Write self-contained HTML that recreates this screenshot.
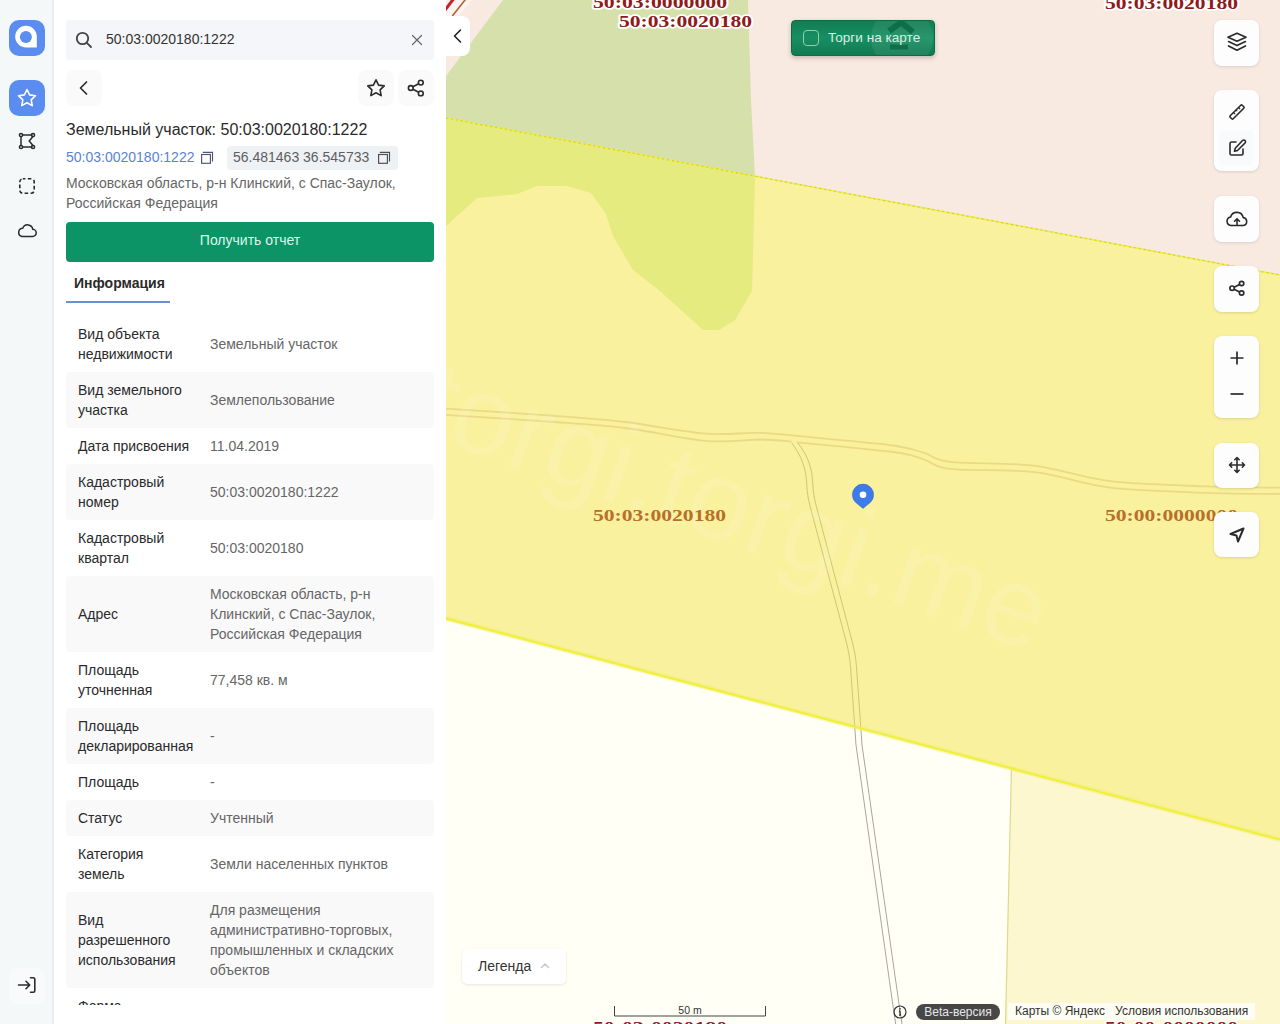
<!DOCTYPE html>
<html><head><meta charset="utf-8">
<style>
*{box-sizing:border-box;margin:0;padding:0}
html,body{width:1280px;height:1024px;overflow:hidden;font-family:"Liberation Sans",sans-serif;background:#fff;position:relative}
.abs{position:absolute}
#map{position:absolute;left:446px;top:0;width:834px;height:1024px;overflow:hidden}
#map svg.base{position:absolute;left:0;top:0}
#rail{position:absolute;left:0;top:0;width:54px;height:1024px;background:#f4f8f9;border-right:2px solid #e8edef}
#panel{position:absolute;left:53px;top:0;width:393px;height:1024px;background:#fff;overflow:hidden}
#panel .t{position:absolute;white-space:nowrap;font-size:14px;line-height:20px;color:#333}
.row{position:absolute;left:13px;width:368px;border-radius:4px}
.row.g{background:#f9f9fa}
.lab{position:absolute;left:12px;font-size:14px;line-height:20px;color:#2a2a2a}
.val{position:absolute;left:144px;font-size:14px;line-height:20px;color:#666}
.ctl{position:absolute;width:45px;background:#fdfdfd;border-radius:8px;box-shadow:0 1px 3px rgba(0,0,0,.12)}
.ctl svg{position:absolute}
</style></head>
<body>
<div id="map">
<svg class="base" width="834" height="1024" viewBox="446 0 834 1024">
  <rect x="446" y="0" width="834" height="1024" fill="#fffff6"/>
  <polygon points="446,0 1280,0 1280,838 446,618" fill="#f8eae1"/>
  <polygon points="503,0 748,0 751,100 755,177 752,291 735,320 719,330 703,330 690,318 660,291 633,270 613,236 606,214 591,193 567,186 537,186 517,194 477,198 446,226 446,76" fill="#d6e0ab"/>
  <!-- right parcel at bottom -->
  <polygon points="1011.5,767 1280,838 1280,1024 1005.5,1024" fill="#fcf7ce"/>
  <line x1="1011.5" y1="767" x2="1005.5" y2="1024" stroke="#dcd98a" stroke-width="1.2"/>
  <g fill="none" stroke="#dfc3b8" stroke-width="1.8">
    <path d="M446.0,408.7 C462.9,409.8 517.8,413.2 547.6,415.4 C577.4,417.6 598.6,418.9 625.0,422.0 C651.4,425.1 683.3,431.9 706.0,433.7 C728.7,435.5 741.7,432.1 761.0,432.9 C780.3,433.7 800.0,436.3 822.0,438.4 C844.0,440.5 876.1,443.1 893.0,445.5 C909.9,447.9 914.1,449.9 923.6,452.6 C933.1,455.3 931.4,459.7 950.0,461.9 C968.6,464.1 1008.3,462.6 1035.0,465.8 C1061.7,469.0 1081.2,477.8 1110.0,481.2 C1138.8,484.6 1179.4,485.3 1207.7,486.4 C1236.0,487.5 1268.0,487.5 1280.0,487.7"/>
    <path d="M446.0,414.8 C462.8,415.9 517.2,419.3 547.0,421.5 C576.8,423.7 598.5,424.8 625.0,428.0 C651.5,431.2 683.3,438.9 706.0,440.8 C728.7,442.7 746.7,439.4 761.0,439.5 C775.3,439.6 786.5,441.2 791.6,441.6"/>
    <path d="M797.4,442.4 C813.3,444.0 872.1,449.2 893.0,452.0 C913.9,454.8 913.5,456.2 923.0,459.0 C932.5,461.8 931.3,466.7 950.0,468.9 C968.7,471.1 1008.3,469.1 1035.0,472.2 C1061.7,475.3 1081.3,484.3 1110.0,487.7 C1138.7,491.1 1178.7,491.8 1207.0,492.8 C1235.3,493.9 1267.8,493.8 1280.0,494.0"/>
  </g>
  <g fill="none" stroke="#aca69c" stroke-width="1">
    <path d="M791.7,442.9 C802,457 806,468 806.8,485 C807.2,493 808,498 810,506 L846.3,642 C848.6,651 850,659 850.6,668 L856,745 L893.3,1008 L895.7,1024"/>
    <path d="M797.4,442.4 C808,456 812,467 812.8,484 C813.2,492 814,497 816,505 L852.3,642 C854.6,651 856,659 856.6,668 L862,745 L899.6,1008 L902,1024"/>
  </g>
  <!-- main parcel overlay -->
  <polygon points="446,118 1280,275 1280,838 446,618" fill="#fafa3e" fill-opacity="0.41"/>
  <!-- roads -->
  <line x1="446" y1="118" x2="1280" y2="275" stroke="#eeee44" stroke-width="1.6"/>
  <line x1="446" y1="118" x2="1280" y2="275" stroke="#c2bc48" stroke-width="1.2" stroke-dasharray="1.8 3.2" stroke-opacity="0.7"/>
  <line x1="446" y1="618.5" x2="1280" y2="839.5" stroke="#f6ec6a" stroke-width="5" stroke-opacity="0.45"/>
  <line x1="446" y1="618.5" x2="1280" y2="839.5" stroke="#eef03c" stroke-width="2.2"/>
  <!-- watermark -->
  <text x="0" y="0" transform="translate(413.8,431.4) rotate(19.7)" font-family="Liberation Sans" font-size="112.7" fill="#ffffff" fill-opacity="0.105">torgi.torgi.me</text>
  <!-- hatching top-left -->
  <polygon points="446,0 472,0 458,17 446,17" fill="#fbf3f0"/>
  <line x1="445" y1="10" x2="453.5" y2="-1" stroke="#c8202c" stroke-width="3"/>
  <line x1="452.3" y1="16" x2="465.8" y2="-1" stroke="#b5602e" stroke-width="1.6"/>
  <!-- labels -->
  <g font-family="Liberation Serif" font-weight="bold" font-size="17.5" paint-order="stroke" stroke="#ffffff" stroke-width="3.5" stroke-linejoin="round" lengthAdjust="spacingAndGlyphs">
    <text x="593" y="8" fill="#8f1a1a" textLength="134" lengthAdjust="spacingAndGlyphs">50:03:0000000</text>
    <text x="619" y="26.6" fill="#8f1a1a" textLength="133" lengthAdjust="spacingAndGlyphs">50:03:0020180</text>
    <text x="1105" y="8.8" fill="#8f1a1a" textLength="133" lengthAdjust="spacingAndGlyphs">50:03:0020180</text>
    <text x="593" y="1033" fill="#8f1a1a" textLength="134" lengthAdjust="spacingAndGlyphs">50:03:0020180</text>
    <text x="1105" y="1033" fill="#8f1a1a" textLength="133" lengthAdjust="spacingAndGlyphs">50:00:0000000</text>
  </g>
  <g font-family="Liberation Serif" font-weight="bold" font-size="17.5" paint-order="stroke" stroke="#f9ef9e" stroke-width="0">
    <text x="593" y="520.5" fill="#b86f2a" textLength="133" lengthAdjust="spacingAndGlyphs">50:03:0020180</text>
    <text x="1105" y="520.5" fill="#b86f2a" textLength="133" lengthAdjust="spacingAndGlyphs">50:00:0000000</text>
  </g>
  <!-- pin -->
  <g transform="translate(863,494.7)">
    <path d="M0,13.7 L-6.71,8.2 A10.6,10.6 0 1 1 6.71,8.2 Z" fill="#3d7be9" stroke="#2f64c8" stroke-width="0.5"/>
    <circle cx="0" cy="0" r="3.3" fill="#fff"/>
  </g>
  <!-- scale bar -->
  <path d="M614.5,1006 V1016 H765.5 V1006" fill="none" stroke="#444" stroke-width="1"/>
  <text x="690" y="1014" text-anchor="middle" font-family="Liberation Sans" font-size="10.5" fill="#333">50 m</text>
</svg>
</div>
<!-- collapse tab -->
<div class="abs" style="left:446px;top:16px;width:24px;height:40px;background:#fff;border-radius:0 8px 8px 0"></div>
<svg class="abs" style="left:450px;top:26px" width="16" height="20" viewBox="0 0 16 20" fill="none" stroke="#222" stroke-width="1.6" stroke-linecap="round" stroke-linejoin="round"><path d="M10.5 4L4.5 10l6 6"/></svg>
<!-- torgi button -->
<div class="abs" style="left:791px;top:20px;width:144px;height:36px;border-radius:4px;background:linear-gradient(180deg,#137c54,#178f62 50%,#127a52);box-shadow:0 2px 5px rgba(0,0,0,.22);overflow:hidden;border:1px solid #0f6a46">
  <div class="abs" style="left:79px;top:-14px;width:62px;height:62px;border-radius:50%;background:rgba(255,255,255,.07)"></div>
  <svg class="abs" style="left:0;top:0" width="144" height="36" viewBox="0 0 144 36"><path d="M97,10 L109,1.5 L121,11" fill="none" stroke="#0b6a45" stroke-width="6" opacity=".85"/><rect x="98" y="23.5" width="18" height="5" fill="#0b6a45" opacity=".85"/></svg>
  <div class="abs" style="left:11px;top:9px;width:16px;height:16px;border:1.2px solid #8fd0b0;border-radius:4px"></div>
  <div class="abs" style="left:36px;top:8px;font-size:13.6px;line-height:18px;color:#d6f0e2;white-space:nowrap">Торги на карте</div>
</div>
<!-- right controls -->
<div class="ctl" style="left:1214px;top:20px;height:46px"></div>
<svg class="abs" style="left:1226px;top:28px" width="22" height="28" viewBox="0 0 22 28" fill="none" stroke="#2b2b2b" stroke-width="1.7" stroke-linejoin="round" stroke-linecap="round"><path d="M11 5.2L20 9.2 11 13.2 2 9.2z"/><path d="M2.6 13.6L11 17.6l8.4-4"/><path d="M2.6 18L11 22.2l8.4-4.2"/></svg>
<div class="ctl" style="left:1214px;top:90px;height:81px"></div>
<svg class="abs" style="left:1227px;top:102px" width="20" height="20" viewBox="0 0 20 20" fill="none" stroke="#2b2b2b" stroke-width="1.6" stroke-linejoin="round"><path d="M3.2 13.8L13.8 3.2c.4-.4 1-.4 1.4 0l1.6 1.6c.4.4.4 1 0 1.4L6.2 16.8c-.4.4-1 .4-1.4 0l-1.6-1.6c-.4-.4-.4-1 0-1.4z"/><path d="M6.5 10.5l1.6 1.6M9 8l1.2 1.2M11.5 5.5l1.6 1.6" stroke-width="1.2"/></svg>
<div class="abs" style="left:1219px;top:130px;width:35px;height:36px;border-radius:6px;background:#f9fafb"></div>
<svg class="abs" style="left:1227px;top:138px" width="20" height="20" viewBox="0 0 20 20" fill="none" stroke="#2b2b2b" stroke-width="1.6" stroke-linecap="round" stroke-linejoin="round"><path d="M9 4H4.5C3.7 4 3 4.7 3 5.5v10c0 .8.7 1.5 1.5 1.5h10c.8 0 1.5-.7 1.5-1.5V11"/><path d="M15.5 2.5c.7-.7 1.9-.7 2.5 0 .7.7.7 1.8 0 2.5L10.5 12.5 7.5 13.3l.8-3z"/></svg>
<div class="ctl" style="left:1214px;top:196px;height:46px"></div>
<svg class="abs" style="left:1225px;top:208px" width="24" height="22" viewBox="0 0 24 22" fill="none" stroke="#2b2b2b" stroke-width="1.6" stroke-linecap="round" stroke-linejoin="round"><path d="M7 17.5H5.8A4.3 4.3 0 0 1 5.6 9a6.5 6.5 0 0 1 12.6.6 4 4 0 0 1 .2 7.9H17"/><path d="M7 17.5h10"/><path d="M12 17V11M9.5 13.2L12 10.7l2.5 2.5"/></svg>
<div class="ctl" style="left:1214px;top:266px;height:46px"></div>
<svg class="abs" style="left:1227px;top:279px" width="20" height="20" viewBox="0 0 20 20" fill="none" stroke="#2b2b2b" stroke-width="1.7"><circle cx="14.6" cy="4.5" r="2.2"/><circle cx="5.1" cy="9.2" r="2.2"/><circle cx="14.6" cy="14" r="2.2"/><path d="M7.1 8.2l5.5-2.7M7.1 10.2l5.5 2.8"/></svg>
<div class="ctl" style="left:1214px;top:336px;height:82px"></div>
<svg class="abs" style="left:1227px;top:348px" width="20" height="20" viewBox="0 0 20 20" fill="none" stroke="#2b2b2b" stroke-width="1.7"><path d="M10 3.5v13M3.5 10h13"/></svg>
<svg class="abs" style="left:1227px;top:384px" width="20" height="20" viewBox="0 0 20 20" fill="none" stroke="#2b2b2b" stroke-width="1.7"><path d="M3.5 10h13"/></svg>
<div class="ctl" style="left:1214px;top:443px;height:45px"></div>
<svg class="abs" style="left:1227px;top:455px" width="20" height="20" viewBox="0 0 20 20" fill="none" stroke="#2b2b2b" stroke-width="1.6" stroke-linecap="round" stroke-linejoin="round"><path d="M10 2.5v15M2.5 10h15M7.8 4.7L10 2.5l2.2 2.2M7.8 15.3L10 17.5l2.2-2.2M4.7 7.8L2.5 10l2.2 2.2M15.3 7.8L17.5 10l-2.2 2.2"/></svg>
<div class="ctl" style="left:1214px;top:512px;height:45px"></div>
<svg class="abs" style="left:1227px;top:525px" width="20" height="20" viewBox="0 0 20 20" fill="none" stroke="#2b2b2b" stroke-width="2" stroke-linejoin="round"><path d="M16.5 3.5L3.5 9l6 1.5 1.5 6z"/></svg>
<!-- legend -->
<div class="abs" style="left:462px;top:949px;width:104px;height:35px;background:#fff;border-radius:5px;box-shadow:0 1px 3px rgba(0,0,0,.1)"></div>
<div class="abs" style="left:478px;top:956px;font-size:14px;line-height:20px;color:#333;white-space:nowrap">Легенда</div>
<svg class="abs" style="left:539px;top:960px" width="12" height="12" viewBox="0 0 12 12" fill="none" stroke="#c8c8c8" stroke-width="1.5" stroke-linecap="round"><path d="M2.5 7.5L6 4l3.5 3.5"/></svg>
<!-- attribution -->
<svg class="abs" style="left:893px;top:1005px" width="14" height="14" viewBox="0 0 14 14" fill="none" stroke="#333" stroke-width="1.2"><circle cx="7" cy="7" r="6"/><path d="M7 6v4.2M6 10.2h2M6 6h1" stroke-width="1.3"/><circle cx="7" cy="3.9" r=".8" fill="#333" stroke="none"/></svg>
<div class="abs" style="left:916px;top:1004px;width:84px;height:16px;border-radius:8px;background:#474747;color:#e6e6e6;font-size:12px;line-height:16px;text-align:center;white-space:nowrap">Beta-версия</div>
<div class="abs" style="left:1008px;top:1003px;width:247px;height:17px;background:rgba(255,255,255,.75);font-size:12px;line-height:17px;color:#333;white-space:nowrap;padding-left:7px">Карты © Яндекс&nbsp;&nbsp; Условия использования</div>
<div id="panel">
  <!-- search -->
  <div class="abs" style="left:13px;top:20px;width:368px;height:40px;border-radius:3px;background:#f5f6f9"></div>
  <svg class="abs" style="left:21px;top:30px" width="20" height="20" viewBox="0 0 20 20" fill="none" stroke="#444" stroke-width="1.8" stroke-linecap="round"><circle cx="8.5" cy="8.5" r="5.7"/><path d="M12.8 12.8l4.2 4.2"/></svg>
  <div class="t" style="left:53px;top:29px;color:#333">50:03:0020180:1222</div>
  <svg class="abs" style="left:357px;top:33px" width="14" height="14" viewBox="0 0 14 14" stroke="#666" stroke-width="1.2" stroke-linecap="round"><path d="M2.5 2.5l9 9M11.5 2.5l-9 9"/></svg>
  <!-- back / star / share -->
  <div class="abs" style="left:13px;top:70px;width:36px;height:36px;border-radius:8px;background:#fafafb"></div>
  <svg class="abs" style="left:21px;top:78px" width="20" height="20" viewBox="0 0 20 20" fill="none" stroke="#2b2b2b" stroke-width="1.7" stroke-linecap="round" stroke-linejoin="round"><path d="M12.5 4L6.5 10l6 6"/></svg>
  <div class="abs" style="left:305px;top:70px;width:36px;height:36px;border-radius:8px;background:#fafafb"></div>
  <svg class="abs" style="left:313px;top:78px" width="20" height="20" viewBox="0 0 20 20" fill="none" stroke="#2b2b2b" stroke-width="1.6" stroke-linejoin="round"><path d="M10 1.8l2.55 5.3 5.7.75-4.15 4 1.05 5.75L10 14.8l-5.15 2.8 1.05-5.75-4.15-4 5.7-.75z"/></svg>
  <div class="abs" style="left:345px;top:70px;width:36px;height:36px;border-radius:8px;background:#fafafb"></div>
  <svg class="abs" style="left:353px;top:78px" width="20" height="20" viewBox="0 0 20 20" fill="none" stroke="#2b2b2b" stroke-width="1.6"><circle cx="14.8" cy="4.6" r="2.4"/><circle cx="4.8" cy="10" r="2.4"/><circle cx="14.8" cy="15.4" r="2.4"/><path d="M6.9 8.8l5.8-3.1M6.9 11.2l5.8 3.1"/></svg>
  <!-- title -->
  <div class="t" style="left:13px;top:119.5px;font-size:16px;line-height:20px;color:#2a2a2a">Земельный участок: 50:03:0020180:1222</div>
  <div class="t" style="left:13px;top:147px;color:#5b82d6">50:03:0020180:1222</div>
  <svg class="abs" style="left:142px;top:145px" width="25" height="25" viewBox="0 0 25 25" fill="none" stroke="#4d5670" stroke-width="1.15"><rect x="6.6" y="9.5" width="8.8" height="8.8"/><path d="M7.8 7.3H17.5V16.6"/></svg>
  <div class="abs" style="left:174px;top:146px;width:171px;height:24px;border-radius:4px;background:#eff2f5"></div>
  <div class="t" style="left:180px;top:147px;color:#5e5e5e">56.481463 36.545733</div>
  <svg class="abs" style="left:318.5px;top:145px" width="25" height="25" viewBox="0 0 25 25" fill="none" stroke="#4d4d4d" stroke-width="1.15"><rect x="6.6" y="9.5" width="8.8" height="8.8"/><path d="M7.8 7.3H17.5V16.6"/></svg>
  <div class="t" style="left:13px;top:173px;color:#666">Московская область, р-н Клинский, с Спас-Заулок,</div>
  <div class="t" style="left:13px;top:193px;color:#666">Российская Федерация</div>
  <!-- button -->
  <div class="abs" style="left:13px;top:222px;width:368px;height:40px;border-radius:4px;background:#0c9467"></div>
  <div class="t" style="left:13px;top:230px;width:368px;text-align:center;color:#dcf7ea">Получить отчет</div>
  <!-- tab -->
  <div class="t" style="left:21px;top:273px;font-weight:bold;color:#2a2a2a">Информация</div>
  <div class="abs" style="left:13px;top:301px;width:104px;height:2px;background:#6b8fd8"></div>
  <!-- rows -->
  <div class="row" style="top:316px;height:56px"><div class="lab" style="top:8px">Вид объекта<br>недвижимости</div><div class="val" style="top:18px">Земельный участок</div></div>
  <div class="row g" style="top:372px;height:56px"><div class="lab" style="top:8px">Вид земельного<br>участка</div><div class="val" style="top:18px">Землепользование</div></div>
  <div class="row" style="top:428px;height:36px"><div class="lab" style="top:8px">Дата присвоения</div><div class="val" style="top:8px">11.04.2019</div></div>
  <div class="row g" style="top:464px;height:56px"><div class="lab" style="top:8px">Кадастровый<br>номер</div><div class="val" style="top:18px">50:03:0020180:1222</div></div>
  <div class="row" style="top:520px;height:56px"><div class="lab" style="top:8px">Кадастровый<br>квартал</div><div class="val" style="top:18px">50:03:0020180</div></div>
  <div class="row g" style="top:576px;height:76px"><div class="lab" style="top:28px">Адрес</div><div class="val" style="top:8px">Московская область, р-н<br>Клинский, с Спас-Заулок,<br>Российская Федерация</div></div>
  <div class="row" style="top:652px;height:56px"><div class="lab" style="top:8px">Площадь<br>уточненная</div><div class="val" style="top:18px">77,458 кв. м</div></div>
  <div class="row g" style="top:708px;height:56px"><div class="lab" style="top:8px">Площадь<br>декларированная</div><div class="val" style="top:18px">-</div></div>
  <div class="row" style="top:764px;height:36px"><div class="lab" style="top:8px">Площадь</div><div class="val" style="top:8px">-</div></div>
  <div class="row g" style="top:800px;height:36px"><div class="lab" style="top:8px">Статус</div><div class="val" style="top:8px">Учтенный</div></div>
  <div class="row" style="top:836px;height:56px"><div class="lab" style="top:8px">Категория<br>земель</div><div class="val" style="top:18px">Земли населенных пунктов</div></div>
  <div class="row g" style="top:892px;height:96px"><div class="lab" style="top:18px">Вид<br>разрешенного<br>использования</div><div class="val" style="top:8px">Для размещения<br>административно-торговых,<br>промышленных и складских<br>объектов</div></div>
  <div class="row" style="top:988px;height:56px"><div class="lab" style="top:8px">Форма<br>собственности</div></div>
  <div class="abs" style="left:0;top:1004.5px;width:393px;height:20px;background:#fff"></div>
</div>
<div id="rail">
  <div class="abs" style="left:9px;top:20px;width:36px;height:36px;border-radius:10px;background:#5b8cf0">
    <svg width="36" height="36" viewBox="0 0 36 36"><path d="M17 5.8A10.8 10.8 0 1 0 17 27.4H27.8V16.6A10.8 10.8 0 0 0 17 5.8z" fill="#fff"/><circle cx="16.9" cy="16.9" r="6" fill="#5b8cf0"/></svg>
  </div>
  <div class="abs" style="left:9px;top:80px;width:36px;height:36px;border-radius:10px;background:#5b8cf0">
    <svg width="36" height="36" viewBox="0 0 36 36"><path d="M18 9.5l2.6 5.4 5.9.8-4.3 4.1 1 5.8L18 22.8l-5.2 2.8 1-5.8-4.3-4.1 5.9-.8z" fill="none" stroke="#fff" stroke-width="1.6" stroke-linejoin="round"/></svg>
  </div>
  <svg class="abs" style="left:17px;top:131px" width="20" height="20" viewBox="0 0 20 20" fill="none" stroke="#2b2b2b" stroke-width="1.5"><path d="M4 5.5v9M5.5 16h10M5.5 4h10M16 5.5L12.2 10 16 14.5"/><circle cx="4" cy="4" r="1.6"/><circle cx="16" cy="4" r="1.6"/><circle cx="4" cy="16" r="1.6"/><circle cx="16" cy="16" r="1.6"/></svg>
  <svg class="abs" style="left:17px;top:175.5px" width="20" height="20" viewBox="0 0 20 20" fill="none" stroke="#2b2b2b" stroke-width="1.6"><rect x="2.8" y="2.8" width="14.4" height="14.4" rx="3" stroke-dasharray="3.6 2.4" stroke-dashoffset="1"/></svg>
  <svg class="abs" style="left:16px;top:220px" width="22" height="20" viewBox="0 0 22 20" fill="none" stroke="#2b2b2b" stroke-width="1.5"><path d="M6 16.5h10.5a3.6 3.6 0 0 0 .3-7.2A5.2 5.2 0 0 0 6.8 8.2 4.2 4.2 0 0 0 6 16.5z" stroke-linejoin="round"/></svg>
  <div class="abs" style="left:9px;top:968px;width:36px;height:36px;border-radius:8px;background:#f8fafb"></div>
  <svg class="abs" style="left:17px;top:975px" width="20" height="20" viewBox="0 0 20 20" fill="none" stroke="#2b2b2b" stroke-width="1.6" stroke-linecap="round" stroke-linejoin="round"><path d="M1.5 10h11M9 6.3l3.7 3.7L9 13.7M13.5 2.7h2.8c1 0 1.5.6 1.5 1.5v11.6c0 .9-.5 1.5-1.5 1.5h-2.8"/></svg>
</div>
</body></html>
